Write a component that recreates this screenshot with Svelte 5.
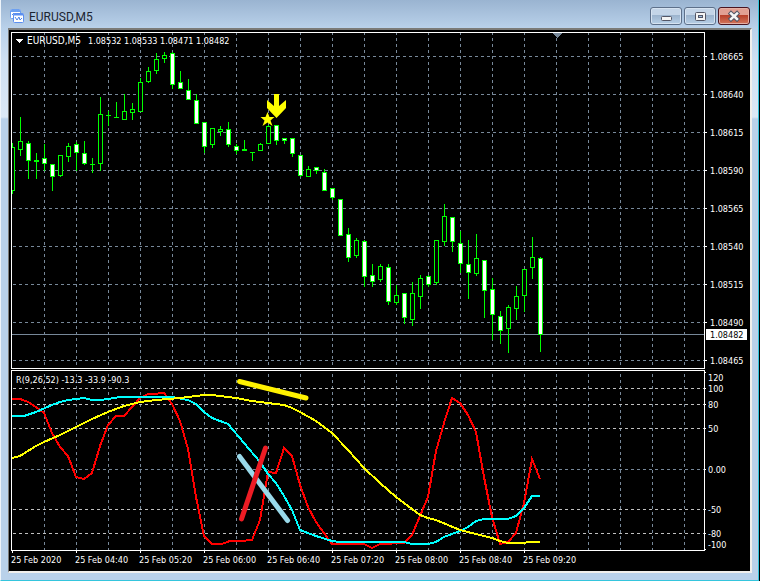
<script lang="ts">
  type Candle = [high: number, top: number, bottom: number, low: number, down: 0 | 1];

  const symbol = "EURUSD,M5";
  const prices = ["1.08532", "1.08533", "1.08471", "1.08482"];
  const times = [
    "25 Feb 2020", "25 Feb 04:40", "25 Feb 05:20", "25 Feb 06:00", "25 Feb 06:40",
    "25 Feb 07:20", "25 Feb 08:00", "25 Feb 08:40", "25 Feb 09:20",
  ];

  const levels = Array.from({ length: 9 }, (_, i) => ({
    y: 56 + i * 38,
    label: (1.08665 - i * 0.00025).toFixed(5),
  }));
  const columns = Array.from({ length: 80 }, (_, i) => 44 + i * 32);
  const bands = [
    { y: 388, major: false },
    { y: 404, major: false },
    { y: 428, major: false },
    { y: 469, major: true },
    { y: 509, major: false },
    { y: 533, major: false },
  ];
  const scale = [
    { y: 377, label: "120" },
    { y: 388, label: "100" },
    { y: 404, label: "80" },
    { y: 428, label: "50" },
    { y: 469, label: "0.00" },
    { y: 509, label: "-50" },
    { y: 533, label: "-80" },
    { y: 544, label: "-100" },
  ];

  // one bar every 8px, starting at x = 12
  const candles: Candle[] = [
    [143, 147, 190, 193, 0], [117, 141, 149, 155, 0], [141, 143, 160, 178, 1], [153, 160, 161, 178, 1],
    [144, 158, 163, 170, 1], [164, 164, 176, 190, 1], [155, 155, 175, 176, 0], [143, 146, 156, 161, 0],
    [142, 144, 152, 170, 1], [141, 153, 163, 164, 1], [158, 164, 164, 172, 0], [97, 114, 163, 170, 0],
    [111, 115, 115, 125, 0], [102, 117, 117, 117, 0], [94, 111, 119, 119, 0], [103, 109, 112, 119, 0],
    [78, 82, 111, 111, 0], [67, 71, 81, 82, 0], [53, 59, 70, 73, 0], [52, 55, 58, 62, 0],
    [52, 53, 84, 88, 1], [71, 82, 88, 88, 1], [79, 90, 99, 99, 1], [94, 100, 123, 123, 1],
    [122, 122, 146, 152, 1], [128, 128, 144, 147, 0], [126, 129, 131, 135, 0], [122, 129, 144, 146, 1],
    [144, 146, 150, 153, 1], [140, 149, 150, 150, 0], [152, 152, 152, 160, 0], [143, 144, 150, 150, 0],
    [125, 126, 143, 143, 0], [125, 125, 140, 144, 1], [138, 138, 140, 143, 1], [138, 138, 153, 156, 1],
    [155, 155, 175, 176, 1], [166, 169, 176, 176, 0], [167, 167, 170, 173, 1], [169, 172, 190, 190, 1],
    [188, 188, 197, 199, 1], [199, 199, 235, 235, 1], [228, 234, 257, 261, 1], [238, 240, 255, 257, 0],
    [240, 241, 276, 286, 1], [264, 275, 281, 286, 1], [264, 266, 279, 281, 0], [264, 267, 301, 304, 1],
    [285, 295, 302, 304, 0], [293, 293, 317, 323, 1], [282, 293, 319, 325, 0], [275, 278, 296, 308, 0],
    [275, 276, 284, 286, 1], [240, 240, 282, 284, 0], [204, 216, 241, 245, 0], [217, 217, 241, 251, 1],
    [231, 243, 263, 272, 1], [240, 264, 272, 298, 1], [234, 258, 273, 275, 0], [260, 260, 290, 317, 1],
    [278, 289, 314, 339, 1], [311, 316, 330, 343, 1], [305, 307, 328, 352, 0], [286, 296, 308, 319, 0],
    [269, 269, 295, 311, 0], [237, 257, 267, 278, 0], [257, 258, 334, 351, 1],
  ];

  const fast =
    "12,399 20,399 28,402 36,407 44,413 52,433 60,447 68,456 76,477 84,479 92,473 100,446 108,425 116,416 124,416 132,407 140,398 148,394 156,394 160,393 164,393 172,404 180,421 188,449 196,497 204,536 212,544 222,544 230,541 240,541 252,540 260,520 268,472 276,473 284,448 292,456 300,485 308,507 316,522 324,533 332,544 364,544 372,548 380,544 404,543 412,535 420,516 428,497 436,451 444,423 452,398 460,403 468,415 476,432 484,477 492,517 500,544 508,542 516,533 524,503 532,459 540,479";
  const middle =
    "12,416 24,416 36,412 52,405 60,402 68,400 84,398 92,400 100,400 108,399 120,397 172,397 188,400 196,404 204,412 212,418 220,421 228,424 244,443 260,462 268,474 276,483 284,496 292,510 300,530 316,536 332,541 340,542 404,542 412,544 428,544 436,542 444,537 460,531 468,527 476,521 484,519 508,519 516,516 524,508 532,496 540,496";
  const slow =
    "12,458 20,456 28,451 36,446 44,442 60,435 76,427 92,419 108,412 124,406 140,402 156,400 180,398 204,395 212,395 236,398 252,401 268,403 284,405 292,408 300,412 316,421 332,433 348,450 364,468 380,483 396,497 412,509 420,515 428,518 436,520 460,530 476,534 492,538 500,541 508,543 520,543 532,542 540,542";
</script>

<main class="window">
  <header class="titlebar">
    <svg class="app-icon" width="14" height="14" viewBox="0 0 14 14" aria-hidden="true">
      <rect x=".5" y=".5" width="10" height="9" rx="1" fill="#fff" stroke="#6da0f0" />
      <path d="M1 2h9" stroke="#6da0f0" stroke-width="2" />
      <path d="M2 6l2-2 2 2 2-2" fill="none" stroke="#4f86e8" />
      <rect x="3.5" y="4.5" width="10" height="9" rx="1" fill="#fff" stroke="#5b8ff0" />
      <path d="M4 5.500h9" stroke="#5b8ff0" stroke-width="2" />
      <path d="M5 8l2 3 2-3 1 3 2-2" fill="none" stroke="#4f86e8" />
    </svg>
    <h1>{symbol}</h1>
    <div class="controls">
      <button type="button" aria-label="Minimize">
        <svg width="14" height="12" viewBox="0 0 14 12" aria-hidden="true">
          <rect x="2.500" y="6.500" width="10" height="4" rx="1" fill="#f4f4f4" stroke="#535666" />
        </svg>
      </button>
      <button type="button" aria-label="Maximize">
        <svg width="14" height="12" viewBox="0 0 14 12" aria-hidden="true">
          <rect x="2.500" y="2.500" width="10" height="8" rx="1" fill="#f4f4f4" stroke="#535666" />
          <rect x="5.500" y="5.500" width="4" height="2" fill="#9dbce0" stroke="#535666" />
        </svg>
      </button>
      <button type="button" class="close" aria-label="Close">
        <svg width="14" height="12" viewBox="0 0 14 12" aria-hidden="true">
          <path d="M4 3.500l6 5.500M10 3.500L4 9" stroke="#535666" stroke-width="4.500" stroke-linecap="square" />
          <path d="M4 3.500l6 5.500M10 3.500L4 9" stroke="#f4f4f4" stroke-width="2.500" stroke-linecap="square" />
        </svg>
      </button>
    </div>
  </header>

  <section class="client">
    <div class="row price-row">
      <svg class="plot" role="img" aria-label="EURUSD candlestick chart">
        <g transform="translate(-12 -33)">
          <g class="grid">
            {#each columns as x}<path d={`M${x + 0.5} 32V368`} />{/each}
            {#each levels as level}<path d={`M13 ${level.y + 0.5}H2600`} />{/each}
          </g>
          <path class="bid" d="M12 334.500H2600" />
          {#each candles as [high, top, bottom, low, down], i}
            <g class="candle" class:down>
              <path d={`M${12.5 + i * 8} ${high}V${low + 1}`} />
              {#if bottom - top < 2}
                <rect class="flat" x={10 + i * 8} y={top} width="5" height={bottom - top + 1} />
              {:else}
                <rect x={10.5 + i * 8} y={top + 0.5} width="4" height={bottom - top} />
              {/if}
            </g>
          {/each}
          <path class="signal" d="M274 94h5v12l7-6v8l-9.500 10L267 108v-8l7 6z" />
          <path class="signal" d="M267.500 112l2 5h5l-4 3.500 2 5.500-5-3.500-5 3.500 2-5.500-4-3.500h5z" />
          <path class="shift" d="M552 33h11l-5.500 5z" />
          <path class="caret" d="M15 39h8l-4 4z" />
          <text class="symbol" x="27" y="44">{symbol}</text>
          {#each prices as price, i}<text x={88 + i * 36} y="44">{price}</text>{/each}
        </g>
      </svg>
      <svg class="axis">
        <g transform="translate(-705 -32)">
          {#each levels as level}
            <path class="tick" d={`M705 ${level.y + 0.5}h2`} />
            <text x="710" y={level.y + 4}>{level.label}</text>
          {/each}
          <rect class="badge" x="706" y="329" width="41" height="11" />
          <text class="current" x="710" y="338">1.08482</text>
        </g>
      </svg>
    </div>

    <div class="row indicator-row">
      <svg class="plot" role="img" aria-label="Williams percent range indicator">
        <g transform="translate(-12 -371)">
          <g class="grid">
            {#each columns as x}<path d={`M${x + 0.5} 374V550`} />{/each}
            {#each bands as band}
              <path class:level={!band.major} d={`M13 ${band.y + 0.5}H2600`} />
            {/each}
          </g>
          <polyline class="line fast" points={fast} />
          <polyline class="line middle" points={middle} />
          <polyline class="line slow" points={slow} />
          <path class="mark yellow" d="M239.500 381.500L306 398" />
          <path class="mark blue" d="M239.500 456.500L287.500 520.500" />
          <path class="mark red" d="M265.500 448L241.500 519" />
          <text x="16" y="383">R(9,26,52) -13.3 -33.9 -90.3</text>
        </g>
      </svg>
      <svg class="axis">
        <g transform="translate(-705 -370)">
          <path class="tick" d="M705 372.500h1M705 549.500h1" />
          {#each bands as band}<path class="tick" d={`M705 ${band.y + 0.5}h1`} />{/each}
          {#each scale as mark}<text x="708" y={mark.y + 4}>{mark.label}</text>{/each}
        </g>
      </svg>
    </div>

    <div class="times">
      {#each times as time}<time>{time}</time>{/each}
    </div>
  </section>
</main>

<style>
  :global(body) {
    margin: 0;
    background: #000;
  }
  .window {
    box-sizing: border-box;
    margin-right: 1px;
    padding: 0 6px 7px 7px;
    background: linear-gradient(#9ab4d1, #b9d1ea 28px, #cfe0f2 60px, #dbe8f6 117px, #b9d1ea 119px);
    border-right: 1px solid #35c5dd;
    border-bottom: 1px solid #35c5dd;
    border-left: 1px solid #eef4fa;
    margin-bottom: 1px;
  }
  .titlebar {
    display: flex;
    gap: 5px;
    align-items: center;
    height: 28px;
    padding: 0 2px;
  }
  .app-icon { margin-top: 4px; }
  h1 {
    margin: 5px 0 0;
    color: #1b2430;
    font: 400 12px/16px Roboto, "Open Sans", sans-serif;
  }
  .controls {
    display: flex;
    gap: 2px;
    margin: 4px 0 0 auto;
  }
  button {
    display: grid;
    width: 32px;
    height: 18px;
    padding: 0;
    place-items: center;
    background: linear-gradient(#c4d5e8 0 45%, #9cb4ce 46%, #b7cfe6);
    border: 1px solid #5d708a;
    border-radius: 3px;
    box-shadow: inset 0 0 0 1px #d6e3f1;
  }
  .close {
    background: linear-gradient(#e2a093 0 45%, #b8402a 46%, #d2765c);
    border-color: #4a1420;
    box-shadow: inset 0 0 0 1px #e5b0a5;
  }
  .client {
    padding: 2px 0 0 2px;
    background: #000;
    border-top: 2px solid #7b7b78;
    border-right: 2px solid #f0efec;
    border-bottom: 2px solid #f0efec;
    border-left: 1px solid #7b7b78;
  }
  .row {
    display: grid;
    grid-template-columns: 1fr 45px;
  }
  .price-row { height: 337px; margin-bottom: 1px; }
  .indicator-row { height: 181px; }
  svg { display: block; }
  .plot {
    box-sizing: border-box;
    width: 100%;
    height: 100%;
    border: 1px solid #fff;
  }
  .axis {
    width: 100%;
    height: 100%;
  }
  .plot, .axis { shape-rendering: crispEdges; }
  text, time {
    color: #fff;
    font: 400 9px/14px "DejaVu Sans Condensed", "Noto Sans", sans-serif;
    fill: #fff;
    white-space: pre;
  }
  .symbol { font-size: 10px; }
  .grid { stroke: #778899; stroke-dasharray: 3 3; }
  .level { stroke: #c0c0c0; }
  .bid { stroke: #778899; }
  .candle { fill: #000; stroke: #0f0; }
  .down { fill: #fff; }
  .flat { fill: #0f0; stroke: none; }
  .signal { fill: #ff0; shape-rendering: auto; }
  .shift { fill: #778899; }
  .caret, .badge { fill: #fff; }
  .tick { stroke: #fff; }
  .current { fill: #000; }
  .line { fill: none; stroke-width: 2; }
  .fast { stroke: #f00; }
  .middle { stroke: #0ff; }
  .slow { stroke: #ff0; }
  .mark { stroke-width: 5; stroke-linecap: round; shape-rendering: auto; }
  .yellow { stroke: #fff200; }
  .blue { stroke: #99d9ea; }
  .red { stroke: #ed1c24; }
  .times {
    display: flex;
    height: 20px;
    overflow: hidden;
  }
  time {
    flex: 0 0 64px;
    box-sizing: border-box;
  }
  time::before {
    display: block;
    width: 1px;
    height: 2px;
    margin-left: 1px;
    background: #fff;
    content: "";
  }
</style>
